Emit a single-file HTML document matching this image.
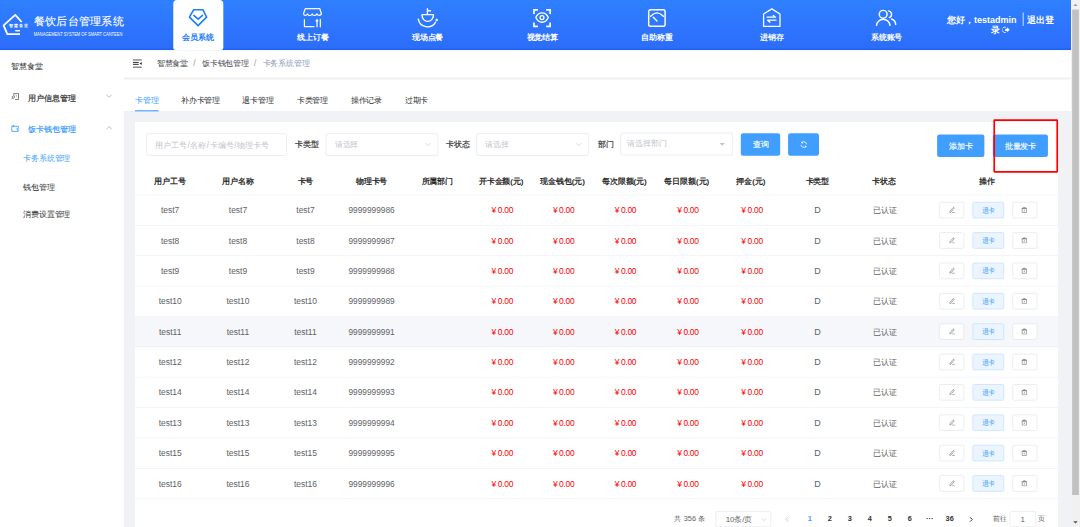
<!DOCTYPE html>
<html><head><meta charset="utf-8">
<style>
*{box-sizing:border-box;margin:0;padding:0}
html,body{width:1080px;height:527px;overflow:hidden;background:#fff}
body{font-family:"Liberation Sans",sans-serif;}
#app{position:absolute;left:0;top:0;width:1920px;height:937px;transform:scale(0.5625);transform-origin:0 0;background:#fff;overflow:hidden}
.abs{position:absolute}
#hdr{left:0;top:0;width:1904px;height:88.5px;z-index:5;background:linear-gradient(180deg,#2f80ff 0%,#2d74fd 60%,#2c6dfa 95%,#1a5ff5 100%)}
.navtxt{position:absolute;top:57px;font-size:14px;font-weight:bold;color:#fff;white-space:nowrap;line-height:18px;transform:translateX(-50%)}
#side{left:0;top:87px;width:220px;height:850px;background:#fff}
.mi{position:absolute;font-size:14px;color:#303133;line-height:20px;white-space:nowrap}
#main{left:220px;top:87px;width:1684px;height:850px;background:#fff}
#bc{left:0;top:0;width:1684px;height:50px;background:#fff}
#tabs{left:0;top:55px;width:1684px;height:55px;background:#fff}
#bcsh{left:0;top:49px;width:1684px;height:8px;background:linear-gradient(180deg,rgba(0,0,0,0) 0%,rgba(0,0,0,.065) 40%,rgba(0,0,0,.03) 70%,rgba(0,0,0,0) 100%)}
.tab{top:26.3px;font-size:14px;line-height:20px;color:#303133;white-space:nowrap}
.inp{height:40px;border:1px solid #dcdfe6;border-radius:4px;background:#fff}
.ph{position:absolute;left:15px;top:9px;font-size:14px;line-height:20px;color:#c0c4cc;white-space:nowrap}
.lbl{top:29.5px;font-size:14px;line-height:20px;color:#3a3a3a;-webkit-text-stroke:0.35px #3a3a3a;white-space:nowrap}
.btn{top:21px;-webkit-text-stroke:0.25px #fff;height:40px;background:#409eff;border-radius:4px;color:#fff;font-size:14px;line-height:40px;text-align:center;white-space:nowrap}
.btn svg{vertical-align:-2px}
.tr{display:flex;height:54.06px;border-bottom:1px solid #ebeef5;align-items:center}
.tr.th{height:47.5px;color:#303133}
.tr.hv{background:#f5f7fa}
.td{text-align:center;font-size:14px;color:#606266;white-space:nowrap;line-height:20px}
.th .td{color:#111;font-weight:normal;-webkit-text-stroke:0.4px #111}
.lt{font-size:15px;position:relative;top:1px}
.ln{font-size:14.8px;position:relative;top:1px}
.m{color:#f00;font-size:15px;letter-spacing:-0.5px;position:relative;left:2px;top:1px}
.y{display:inline-block;width:11px;text-align:left;font-size:15px;letter-spacing:0}
.ob{display:inline-block;vertical-align:middle;height:29px;border:1px solid #dcdfe6;border-radius:3px;background:#fff;width:44px;line-height:29px;font-size:12px;margin:0 7.5px;position:relative;left:2px}
.ob svg{vertical-align:-1px}
.ob.tk{width:56px;background:#ecf5ff;border-color:#b3d8ff;color:#409eff}
.pg{font-size:13px;color:#606266;line-height:18px}
.sel{height:28px;border:1px solid #dcdfe6;border-radius:3px;background:#fff;font-size:13px;color:#606266;line-height:18px}
.pn{top:0;width:35.5px;text-align:center;color:#303133;font-weight:bold}
#card{left:20px;top:130px;width:1641px;height:740px;background:#fff}
</style></head><body>
<div id="app">
  <div id="hdr" class="abs">
    <div class="abs" style="left:307.5px;top:0;width:89px;height:88.5px;background:#fff;border-radius:7px 7px 4px 4px"></div>
    <div class="abs" style="left:60px;top:24.5px;font-size:20.3px;color:#fff;line-height:26px;white-space:nowrap;-webkit-text-stroke:0.2px #fff">餐饮后台管理系统</div>
    <div class="abs" style="left:60px;top:55px;font-size:8.6px;color:#fff;line-height:12px;white-space:nowrap;transform:scaleX(0.833);transform-origin:0 0">MANAGEMENT SYSTEM OF SMART CANTEEN</div>
    <div class="abs" style="left:16px;top:41px;width:36px;height:10px;font-size:7.6px;color:#fff;line-height:10px;white-space:nowrap;font-weight:bold"><span class="abs" style="left:0">智</span><span class="abs" style="left:9px">慧</span><span class="abs" style="left:18px">食</span><span class="abs" style="left:27px">堂</span></div>
    <svg class="abs" style="left:0;top:0" width="1904" height="87" viewBox="0 0 1071 48.94" fill="none" stroke="#fff" stroke-linecap="round" stroke-linejoin="round">
      <!-- logo -->
      <path d="M21.6 22 L15.2 14.9 L3.6 25.4 L7.3 34.2 L20 34.2" stroke-width="1.8" stroke-linecap="butt"/>
      <path d="M15.2 30.7 H20" stroke-width="1.5" stroke-linecap="butt"/>
      <!-- diamond -->
      <g stroke="#1a7ef9" stroke-width="1.6">
        <path d="M193.7 9.7 H202.8 L206.6 17.1 L198.1 25.6 L189.4 17.1 Z"/>
        <path d="M193.8 15.4 L198.1 19.1 L202.5 15.4"/>
      </g>
      <!-- shop -->
      <g stroke-width="1.2">
        <path d="M305.2 8.7 H319.8 L321.3 13.3 Q321.3 15.3 319.2 15.3 Q317.6 15.3 317 13.9 Q316 15.5 314.3 15.5 Q312.6 15.5 312.2 13.9 Q311.6 15.5 309.9 15.5 Q308.2 15.5 307.5 13.9 Q307 15.3 305.5 15.3 Q303.5 15.3 303.6 13.3 Z"/>
        <path d="M304.4 19.6 V26.6 H314"/>
        <path d="M317 19.3 V26.8 M320.3 19.3 V26.8 M316.1 20.9 H317.9"/>
      </g>
      <!-- bowl -->
      <g stroke-width="1.4">
        <path d="M427.4 8.6 V14.3 M427.4 10.8 H430.5"/>
        <path d="M422 14.6 H433.4 V15.3 A5.7 6.1 0 0 1 422 15.3 Z"/>
        <path d="M418.3 19.2 A9.3 9 0 0 0 435.6 22.2"/>
        <circle cx="436.7" cy="20" r="0.5" fill="#fff"/>
      </g>
      <!-- eye -->
      <g stroke-width="1.7" stroke-linecap="butt" stroke-linejoin="miter">
        <path d="M533.95 13.9 V9.95 H537.9 M546.2 9.95 H550.15 V13.9 M550.15 22.4 V26.4 H546.2 M537.9 26.4 H533.95 V22.4"/>
        <path d="M535.8 17.6 C538.5 11.4 545.6 11.4 548.3 17.6 C545.6 23.8 538.5 23.8 535.8 17.6 Z" stroke-linejoin="round" stroke-width="1.3"/>
        <circle cx="542" cy="17.6" r="1.95" stroke-width="1.3"/>
      </g>
      <!-- scale -->
      <g stroke-width="1.45">
        <rect x="648.7" y="9.7" width="16.4" height="16.6" rx="1.8"/>
        <path d="M650.6 16.3 Q657 9.5 663.4 16.3"/>
        <path d="M653.3 17.2 L657 21"/>
      </g>
      <!-- house arrows -->
      <g stroke-width="1.3">
        <path d="M763.6 14 L771.8 8.9 L780 14 V26.3 H763.6 Z"/>
        <path d="M767.2 17.2 H775.6 L773.3 15.4 M776 20.2 H767.6 L769.9 22.2"/>
      </g>
      <!-- users -->
      <g stroke-width="1.45">
        <circle cx="883.2" cy="14.3" r="3.9"/>
        <path d="M876.5 25.3 A6.8 6.8 0 0 1 890 25.3"/>
        <path d="M888.6 10.9 A3.5 3.5 0 0 1 889.4 17.6"/>
        <path d="M891.5 19 A6 6 0 0 1 895.7 24.5"/>
      </g>
    </svg>
    <div class="navtxt" style="left:352px;color:#1c7cf9">会员系统</div>
    <div class="navtxt" style="left:556px">线上订餐</div>
    <div class="navtxt" style="left:760px">现场点餐</div>
    <div class="navtxt" style="left:964px">视觉结算</div>
    <div class="navtxt" style="left:1168px">自助称重</div>
    <div class="navtxt" style="left:1372px">进销存</div>
    <div class="navtxt" style="left:1576px">系统账号</div>
    <div class="abs" style="left:1683px;top:26px;width:192px;font-size:16px;font-weight:bold;color:#fff;line-height:18.6px;text-align:center">您好，testadmin<span style="border-left:2px solid rgba(255,255,255,.7);padding:4px 0 3px 0;margin:0 6px 0 11px"></span>退出登录 <svg width="14" height="14" viewBox="0 0 14 14" style="vertical-align:-1px"><path d="M6 2.5 A4.8 4.8 0 1 0 6 11.5" fill="none" stroke="#fff" stroke-width="1.6"/><path d="M5 5 H8.5 V2.5 L13 7 L8.5 11.5 V9 H5 Z" fill="#fff"/></svg></div>
  </div>
  <div id="side" class="abs">
    <div class="mi" style="left:20px;top:20px;color:#303133">智慧食堂</div>
    <svg class="abs" style="left:19px;top:78px" width="16" height="16" viewBox="0 0 16 16" fill="none" stroke="#606266" stroke-width="1.3"><path d="M5.6 4.8 V1 H13.9 V11.8 H7.8" stroke-width="1.5"/><path d="M8.4 4.3 H11 M10.8 4.3 V8" stroke="#aaa" stroke-width="1.3"/><circle cx="4.8" cy="7.6" r="2.1" stroke-width="1.4"/><path d="M3.3 9.3 L1.6 11.6" stroke-width="1.3"/></svg>
    <div class="mi" style="left:50px;top:76.5px;color:#303133;-webkit-text-stroke:0.35px #303133">用户信息管理</div>
    <svg class="abs" style="left:188px;top:80px" width="12" height="8" viewBox="0 0 12 8" fill="none" stroke="#909399" stroke-width="1.1"><path d="M1.5 1.5 L6 6 L10.5 1.5"/></svg>
    <svg class="abs" style="left:19px;top:133px" width="16" height="16" viewBox="0 0 16 16" fill="none" stroke="#409eff" stroke-width="1.4"><path d="M2 5 L5.5 2.7 V5 M2 4.6 H13.6 V8.3 H11.2 V10.8 H13.6 V13.6 H2 Z" stroke-width="1.5"/></svg>
    <div class="mi" style="left:50px;top:132.5px;color:#409eff;-webkit-text-stroke:0.35px #409eff">饭卡钱包管理</div>
    <svg class="abs" style="left:188px;top:136px" width="12" height="8" viewBox="0 0 12 8" fill="none" stroke="#909399" stroke-width="1.1"><path d="M1.5 6.5 L6 2 L10.5 6.5"/></svg>
    <div class="mi" style="left:41px;top:185px;color:#409eff">卡务系统管理</div>
    <div class="mi" style="left:41px;top:234.5px">钱包管理</div>
    <div class="mi" style="left:41px;top:284px">消费设置管理</div>
  </div>
  <div id="main" class="abs">
    <div id="bc" class="abs">
      <svg class="abs" style="left:16px;top:18px" width="17" height="16" viewBox="0 0 17 16" fill="#303133"><rect x="0" y="0.7" width="16" height="1.8" fill="#555"/><rect x="0" y="5.1" width="10.5" height="1.8"/><rect x="0" y="8.5" width="10.5" height="1.8"/><rect x="0" y="13.5" width="16" height="1.8" fill="#555"/><path d="M16 5 L12 7.8 L16 10.6 Z"/></svg>
      <div class="abs" style="left:58.5px;top:16px;font-size:14px;line-height:20px;white-space:nowrap;color:#606266"><span style="color:#4a4c50">智慧食堂</span><span style="margin:0 11px 0 9px;color:#9a9ea6;font-size:15px">/</span><span style="color:#4a4c50">饭卡钱包管理</span><span style="margin:0 11px 0 9px;color:#9a9ea6;font-size:15px">/</span><span style="color:#8a9cbc">卡务系统管理</span></div>
    </div>
    <div class="abs" style="left:0;top:110px;width:1684px;height:740px;background:#f0f2f5"></div>
    <div id="bcsh" class="abs"></div>
    <div id="tabs" class="abs">
      <div class="abs tab" style="left:20px;color:#409eff">卡管理</div>
      <div class="abs" style="left:20px;top:54px;width:42px;height:2px;background:#409eff"></div>
      <div class="abs tab" style="left:101.5px">补办卡管理</div>
      <div class="abs tab" style="left:211px">退卡管理</div>
      <div class="abs tab" style="left:307.5px">卡类管理</div>
      <div class="abs tab" style="left:403.5px">操作记录</div>
      <div class="abs tab" style="left:499.5px">过期卡</div>
    </div>
    <div id="card" class="abs">
      <div class="inp abs" style="left:20px;top:20px;width:250px"><span class="ph" style="top:9.5px">用户工号<span style="margin:0 1.2px;font-size:15px">/</span>名称<span style="margin:0 1.2px;font-size:15px">/</span>卡编号<span style="margin:0 1.2px;font-size:15px">/</span>物理卡号</span></div>
      <div class="lbl abs" style="left:285px">卡类型</div>
      <div class="inp abs" style="left:339px;top:20px;width:200px"><span class="ph">请选择</span><svg class="abs" style="right:11px;top:15px" width="12" height="8" viewBox="0 0 12 8" fill="none" stroke="#c0c4cc" stroke-width="1.1"><path d="M1.5 1.5 L6 6 L10.5 1.5"/></svg></div>
      <div class="lbl abs" style="left:553px">卡状态</div>
      <div class="inp abs" style="left:607px;top:20px;width:200px"><span class="ph">请选择</span><svg class="abs" style="right:11px;top:15px" width="12" height="8" viewBox="0 0 12 8" fill="none" stroke="#c0c4cc" stroke-width="1.1"><path d="M1.5 1.5 L6 6 L10.5 1.5"/></svg></div>
      <div class="lbl abs" style="left:823px">部门</div>
      <div class="inp abs" style="left:863px;top:19px;width:200px"><span class="ph" style="left:11px;top:8px">请选择部门</span><svg class="abs" style="right:12px;top:17px" width="12" height="6" viewBox="0 0 12 6" fill="#c0c4cc"><path d="M1 0 H11 L6 5 Z"/></svg></div>
      <div class="btn abs" style="left:1077px;width:70px;top:20px">查询</div>
      <div class="btn abs" style="left:1161px;width:55px;top:20px"><svg width="14" height="14" viewBox="0 0 14 14" fill="none" stroke="#fff" stroke-width="1.5"><path d="M3.6 3.4 A4.9 4.9 0 0 1 11.9 6.5 M10.4 10.6 A4.9 4.9 0 0 1 2.1 7.5"/><path d="M1.8 3.2 L4.8 1.9 L4.6 5.1 Z M12.2 10.8 L9.2 12.1 L9.4 8.9 Z" fill="#fff" stroke-width="0.6"/></svg></div>
      <div class="btn abs" style="left:1426px;width:84px;top:21.5px">添加卡</div>
      <div class="btn abs" style="left:1525px;width:98px;top:21.5px">批量发卡</div>
      <div class="abs" style="left:1526px;top:-5px;width:114.5px;height:95px;border:3.4px solid #f00;border-radius:2px"></div>
      <div class="abs" style="left:0;top:82px;width:1641px"><div class="tr th"><div class="td" style="width:125px">用户工号</div><div class="td" style="width:116px">用户名称</div><div class="td" style="width:124px">卡号</div><div class="td" style="width:111px">物理卡号</div><div class="td" style="width:123px">所属部门</div><div class="td" style="width:104px">开卡金额(元)</div><div class="td" style="width:114px">现金钱包(元)</div><div class="td" style="width:106px">每次限额(元)</div><div class="td" style="width:116px">每日限额(元)</div><div class="td" style="width:112px">押金(元)</div><div class="td" style="width:124px">卡类型</div><div class="td" style="width:114px">卡状态</div><div class="td" style="width:252px">操作</div></div><div class="tr "><div class="td" style="width:125px"><span class="lt">test7</span></div><div class="td" style="width:116px"><span class="lt">test7</span></div><div class="td" style="width:124px"><span class="lt">test7</span></div><div class="td" style="width:111px"><span class="ln">9999999986</span></div><div class="td" style="width:123px"></div><div class="td" style="width:104px"><span class="m"><span class="y">¥</span>0.00</span></div><div class="td" style="width:114px"><span class="m"><span class="y">¥</span>0.00</span></div><div class="td" style="width:106px"><span class="m"><span class="y">¥</span>0.00</span></div><div class="td" style="width:116px"><span class="m"><span class="y">¥</span>0.00</span></div><div class="td" style="width:112px"><span class="m"><span class="y">¥</span>0.00</span></div><div class="td" style="width:124px"><span style="font-size:16px;position:relative;left:0.5px;top:1px">D</span></div><div class="td" style="width:114px"><span style="position:relative;left:1px;top:1px">已认证</span></div><div class="td" style="width:252px"><span class="ob"><svg width="12" height="12" viewBox="0 0 12 12" fill="none" stroke="#6b6e74" stroke-width="1.05"><path d="M2.6 10.6 L2.9 8.6 L8.3 2.2 Q9.2 1.3 10 2.1 Q10.7 2.9 9.9 3.8 L4.6 10.2 Z M6.8 10.8 H11.4"/></svg></span><span class="ob tk">退卡</span><span class="ob"><svg width="12" height="12" viewBox="0 0 12 12" fill="none" stroke="#6b6e74" stroke-width="1.05" style="position:relative;left:-1.5px"><path d="M2.3 3.4 H9.7 V10.9 H2.3 Z M1.3 3.4 H10.7 M4.6 3.4 V1.6 H7.4 V3.4 M6 5.6 V8.8"/></svg></span></div></div><div class="tr "><div class="td" style="width:125px"><span class="lt">test8</span></div><div class="td" style="width:116px"><span class="lt">test8</span></div><div class="td" style="width:124px"><span class="lt">test8</span></div><div class="td" style="width:111px"><span class="ln">9999999987</span></div><div class="td" style="width:123px"></div><div class="td" style="width:104px"><span class="m"><span class="y">¥</span>0.00</span></div><div class="td" style="width:114px"><span class="m"><span class="y">¥</span>0.00</span></div><div class="td" style="width:106px"><span class="m"><span class="y">¥</span>0.00</span></div><div class="td" style="width:116px"><span class="m"><span class="y">¥</span>0.00</span></div><div class="td" style="width:112px"><span class="m"><span class="y">¥</span>0.00</span></div><div class="td" style="width:124px"><span style="font-size:16px;position:relative;left:0.5px;top:1px">D</span></div><div class="td" style="width:114px"><span style="position:relative;left:1px;top:1px">已认证</span></div><div class="td" style="width:252px"><span class="ob"><svg width="12" height="12" viewBox="0 0 12 12" fill="none" stroke="#6b6e74" stroke-width="1.05"><path d="M2.6 10.6 L2.9 8.6 L8.3 2.2 Q9.2 1.3 10 2.1 Q10.7 2.9 9.9 3.8 L4.6 10.2 Z M6.8 10.8 H11.4"/></svg></span><span class="ob tk">退卡</span><span class="ob"><svg width="12" height="12" viewBox="0 0 12 12" fill="none" stroke="#6b6e74" stroke-width="1.05" style="position:relative;left:-1.5px"><path d="M2.3 3.4 H9.7 V10.9 H2.3 Z M1.3 3.4 H10.7 M4.6 3.4 V1.6 H7.4 V3.4 M6 5.6 V8.8"/></svg></span></div></div><div class="tr "><div class="td" style="width:125px"><span class="lt">test9</span></div><div class="td" style="width:116px"><span class="lt">test9</span></div><div class="td" style="width:124px"><span class="lt">test9</span></div><div class="td" style="width:111px"><span class="ln">9999999988</span></div><div class="td" style="width:123px"></div><div class="td" style="width:104px"><span class="m"><span class="y">¥</span>0.00</span></div><div class="td" style="width:114px"><span class="m"><span class="y">¥</span>0.00</span></div><div class="td" style="width:106px"><span class="m"><span class="y">¥</span>0.00</span></div><div class="td" style="width:116px"><span class="m"><span class="y">¥</span>0.00</span></div><div class="td" style="width:112px"><span class="m"><span class="y">¥</span>0.00</span></div><div class="td" style="width:124px"><span style="font-size:16px;position:relative;left:0.5px;top:1px">D</span></div><div class="td" style="width:114px"><span style="position:relative;left:1px;top:1px">已认证</span></div><div class="td" style="width:252px"><span class="ob"><svg width="12" height="12" viewBox="0 0 12 12" fill="none" stroke="#6b6e74" stroke-width="1.05"><path d="M2.6 10.6 L2.9 8.6 L8.3 2.2 Q9.2 1.3 10 2.1 Q10.7 2.9 9.9 3.8 L4.6 10.2 Z M6.8 10.8 H11.4"/></svg></span><span class="ob tk">退卡</span><span class="ob"><svg width="12" height="12" viewBox="0 0 12 12" fill="none" stroke="#6b6e74" stroke-width="1.05" style="position:relative;left:-1.5px"><path d="M2.3 3.4 H9.7 V10.9 H2.3 Z M1.3 3.4 H10.7 M4.6 3.4 V1.6 H7.4 V3.4 M6 5.6 V8.8"/></svg></span></div></div><div class="tr "><div class="td" style="width:125px"><span class="lt">test10</span></div><div class="td" style="width:116px"><span class="lt">test10</span></div><div class="td" style="width:124px"><span class="lt">test10</span></div><div class="td" style="width:111px"><span class="ln">9999999989</span></div><div class="td" style="width:123px"></div><div class="td" style="width:104px"><span class="m"><span class="y">¥</span>0.00</span></div><div class="td" style="width:114px"><span class="m"><span class="y">¥</span>0.00</span></div><div class="td" style="width:106px"><span class="m"><span class="y">¥</span>0.00</span></div><div class="td" style="width:116px"><span class="m"><span class="y">¥</span>0.00</span></div><div class="td" style="width:112px"><span class="m"><span class="y">¥</span>0.00</span></div><div class="td" style="width:124px"><span style="font-size:16px;position:relative;left:0.5px;top:1px">D</span></div><div class="td" style="width:114px"><span style="position:relative;left:1px;top:1px">已认证</span></div><div class="td" style="width:252px"><span class="ob"><svg width="12" height="12" viewBox="0 0 12 12" fill="none" stroke="#6b6e74" stroke-width="1.05"><path d="M2.6 10.6 L2.9 8.6 L8.3 2.2 Q9.2 1.3 10 2.1 Q10.7 2.9 9.9 3.8 L4.6 10.2 Z M6.8 10.8 H11.4"/></svg></span><span class="ob tk">退卡</span><span class="ob"><svg width="12" height="12" viewBox="0 0 12 12" fill="none" stroke="#6b6e74" stroke-width="1.05" style="position:relative;left:-1.5px"><path d="M2.3 3.4 H9.7 V10.9 H2.3 Z M1.3 3.4 H10.7 M4.6 3.4 V1.6 H7.4 V3.4 M6 5.6 V8.8"/></svg></span></div></div><div class="tr hv"><div class="td" style="width:125px"><span class="lt">test11</span></div><div class="td" style="width:116px"><span class="lt">test11</span></div><div class="td" style="width:124px"><span class="lt">test11</span></div><div class="td" style="width:111px"><span class="ln">9999999991</span></div><div class="td" style="width:123px"></div><div class="td" style="width:104px"><span class="m"><span class="y">¥</span>0.00</span></div><div class="td" style="width:114px"><span class="m"><span class="y">¥</span>0.00</span></div><div class="td" style="width:106px"><span class="m"><span class="y">¥</span>0.00</span></div><div class="td" style="width:116px"><span class="m"><span class="y">¥</span>0.00</span></div><div class="td" style="width:112px"><span class="m"><span class="y">¥</span>0.00</span></div><div class="td" style="width:124px"><span style="font-size:16px;position:relative;left:0.5px;top:1px">D</span></div><div class="td" style="width:114px"><span style="position:relative;left:1px;top:1px">已认证</span></div><div class="td" style="width:252px"><span class="ob"><svg width="12" height="12" viewBox="0 0 12 12" fill="none" stroke="#6b6e74" stroke-width="1.05"><path d="M2.6 10.6 L2.9 8.6 L8.3 2.2 Q9.2 1.3 10 2.1 Q10.7 2.9 9.9 3.8 L4.6 10.2 Z M6.8 10.8 H11.4"/></svg></span><span class="ob tk">退卡</span><span class="ob"><svg width="12" height="12" viewBox="0 0 12 12" fill="none" stroke="#6b6e74" stroke-width="1.05" style="position:relative;left:-1.5px"><path d="M2.3 3.4 H9.7 V10.9 H2.3 Z M1.3 3.4 H10.7 M4.6 3.4 V1.6 H7.4 V3.4 M6 5.6 V8.8"/></svg></span></div></div><div class="tr "><div class="td" style="width:125px"><span class="lt">test12</span></div><div class="td" style="width:116px"><span class="lt">test12</span></div><div class="td" style="width:124px"><span class="lt">test12</span></div><div class="td" style="width:111px"><span class="ln">9999999992</span></div><div class="td" style="width:123px"></div><div class="td" style="width:104px"><span class="m"><span class="y">¥</span>0.00</span></div><div class="td" style="width:114px"><span class="m"><span class="y">¥</span>0.00</span></div><div class="td" style="width:106px"><span class="m"><span class="y">¥</span>0.00</span></div><div class="td" style="width:116px"><span class="m"><span class="y">¥</span>0.00</span></div><div class="td" style="width:112px"><span class="m"><span class="y">¥</span>0.00</span></div><div class="td" style="width:124px"><span style="font-size:16px;position:relative;left:0.5px;top:1px">D</span></div><div class="td" style="width:114px"><span style="position:relative;left:1px;top:1px">已认证</span></div><div class="td" style="width:252px"><span class="ob"><svg width="12" height="12" viewBox="0 0 12 12" fill="none" stroke="#6b6e74" stroke-width="1.05"><path d="M2.6 10.6 L2.9 8.6 L8.3 2.2 Q9.2 1.3 10 2.1 Q10.7 2.9 9.9 3.8 L4.6 10.2 Z M6.8 10.8 H11.4"/></svg></span><span class="ob tk">退卡</span><span class="ob"><svg width="12" height="12" viewBox="0 0 12 12" fill="none" stroke="#6b6e74" stroke-width="1.05" style="position:relative;left:-1.5px"><path d="M2.3 3.4 H9.7 V10.9 H2.3 Z M1.3 3.4 H10.7 M4.6 3.4 V1.6 H7.4 V3.4 M6 5.6 V8.8"/></svg></span></div></div><div class="tr "><div class="td" style="width:125px"><span class="lt">test14</span></div><div class="td" style="width:116px"><span class="lt">test14</span></div><div class="td" style="width:124px"><span class="lt">test14</span></div><div class="td" style="width:111px"><span class="ln">9999999993</span></div><div class="td" style="width:123px"></div><div class="td" style="width:104px"><span class="m"><span class="y">¥</span>0.00</span></div><div class="td" style="width:114px"><span class="m"><span class="y">¥</span>0.00</span></div><div class="td" style="width:106px"><span class="m"><span class="y">¥</span>0.00</span></div><div class="td" style="width:116px"><span class="m"><span class="y">¥</span>0.00</span></div><div class="td" style="width:112px"><span class="m"><span class="y">¥</span>0.00</span></div><div class="td" style="width:124px"><span style="font-size:16px;position:relative;left:0.5px;top:1px">D</span></div><div class="td" style="width:114px"><span style="position:relative;left:1px;top:1px">已认证</span></div><div class="td" style="width:252px"><span class="ob"><svg width="12" height="12" viewBox="0 0 12 12" fill="none" stroke="#6b6e74" stroke-width="1.05"><path d="M2.6 10.6 L2.9 8.6 L8.3 2.2 Q9.2 1.3 10 2.1 Q10.7 2.9 9.9 3.8 L4.6 10.2 Z M6.8 10.8 H11.4"/></svg></span><span class="ob tk">退卡</span><span class="ob"><svg width="12" height="12" viewBox="0 0 12 12" fill="none" stroke="#6b6e74" stroke-width="1.05" style="position:relative;left:-1.5px"><path d="M2.3 3.4 H9.7 V10.9 H2.3 Z M1.3 3.4 H10.7 M4.6 3.4 V1.6 H7.4 V3.4 M6 5.6 V8.8"/></svg></span></div></div><div class="tr "><div class="td" style="width:125px"><span class="lt">test13</span></div><div class="td" style="width:116px"><span class="lt">test13</span></div><div class="td" style="width:124px"><span class="lt">test13</span></div><div class="td" style="width:111px"><span class="ln">9999999994</span></div><div class="td" style="width:123px"></div><div class="td" style="width:104px"><span class="m"><span class="y">¥</span>0.00</span></div><div class="td" style="width:114px"><span class="m"><span class="y">¥</span>0.00</span></div><div class="td" style="width:106px"><span class="m"><span class="y">¥</span>0.00</span></div><div class="td" style="width:116px"><span class="m"><span class="y">¥</span>0.00</span></div><div class="td" style="width:112px"><span class="m"><span class="y">¥</span>0.00</span></div><div class="td" style="width:124px"><span style="font-size:16px;position:relative;left:0.5px;top:1px">D</span></div><div class="td" style="width:114px"><span style="position:relative;left:1px;top:1px">已认证</span></div><div class="td" style="width:252px"><span class="ob"><svg width="12" height="12" viewBox="0 0 12 12" fill="none" stroke="#6b6e74" stroke-width="1.05"><path d="M2.6 10.6 L2.9 8.6 L8.3 2.2 Q9.2 1.3 10 2.1 Q10.7 2.9 9.9 3.8 L4.6 10.2 Z M6.8 10.8 H11.4"/></svg></span><span class="ob tk">退卡</span><span class="ob"><svg width="12" height="12" viewBox="0 0 12 12" fill="none" stroke="#6b6e74" stroke-width="1.05" style="position:relative;left:-1.5px"><path d="M2.3 3.4 H9.7 V10.9 H2.3 Z M1.3 3.4 H10.7 M4.6 3.4 V1.6 H7.4 V3.4 M6 5.6 V8.8"/></svg></span></div></div><div class="tr "><div class="td" style="width:125px"><span class="lt">test15</span></div><div class="td" style="width:116px"><span class="lt">test15</span></div><div class="td" style="width:124px"><span class="lt">test15</span></div><div class="td" style="width:111px"><span class="ln">9999999995</span></div><div class="td" style="width:123px"></div><div class="td" style="width:104px"><span class="m"><span class="y">¥</span>0.00</span></div><div class="td" style="width:114px"><span class="m"><span class="y">¥</span>0.00</span></div><div class="td" style="width:106px"><span class="m"><span class="y">¥</span>0.00</span></div><div class="td" style="width:116px"><span class="m"><span class="y">¥</span>0.00</span></div><div class="td" style="width:112px"><span class="m"><span class="y">¥</span>0.00</span></div><div class="td" style="width:124px"><span style="font-size:16px;position:relative;left:0.5px;top:1px">D</span></div><div class="td" style="width:114px"><span style="position:relative;left:1px;top:1px">已认证</span></div><div class="td" style="width:252px"><span class="ob"><svg width="12" height="12" viewBox="0 0 12 12" fill="none" stroke="#6b6e74" stroke-width="1.05"><path d="M2.6 10.6 L2.9 8.6 L8.3 2.2 Q9.2 1.3 10 2.1 Q10.7 2.9 9.9 3.8 L4.6 10.2 Z M6.8 10.8 H11.4"/></svg></span><span class="ob tk">退卡</span><span class="ob"><svg width="12" height="12" viewBox="0 0 12 12" fill="none" stroke="#6b6e74" stroke-width="1.05" style="position:relative;left:-1.5px"><path d="M2.3 3.4 H9.7 V10.9 H2.3 Z M1.3 3.4 H10.7 M4.6 3.4 V1.6 H7.4 V3.4 M6 5.6 V8.8"/></svg></span></div></div><div class="tr "><div class="td" style="width:125px"><span class="lt">test16</span></div><div class="td" style="width:116px"><span class="lt">test16</span></div><div class="td" style="width:124px"><span class="lt">test16</span></div><div class="td" style="width:111px"><span class="ln">9999999996</span></div><div class="td" style="width:123px"></div><div class="td" style="width:104px"><span class="m"><span class="y">¥</span>0.00</span></div><div class="td" style="width:114px"><span class="m"><span class="y">¥</span>0.00</span></div><div class="td" style="width:106px"><span class="m"><span class="y">¥</span>0.00</span></div><div class="td" style="width:116px"><span class="m"><span class="y">¥</span>0.00</span></div><div class="td" style="width:112px"><span class="m"><span class="y">¥</span>0.00</span></div><div class="td" style="width:124px"><span style="font-size:16px;position:relative;left:0.5px;top:1px">D</span></div><div class="td" style="width:114px"><span style="position:relative;left:1px;top:1px">已认证</span></div><div class="td" style="width:252px"><span class="ob"><svg width="12" height="12" viewBox="0 0 12 12" fill="none" stroke="#6b6e74" stroke-width="1.05"><path d="M2.6 10.6 L2.9 8.6 L8.3 2.2 Q9.2 1.3 10 2.1 Q10.7 2.9 9.9 3.8 L4.6 10.2 Z M6.8 10.8 H11.4"/></svg></span><span class="ob tk">退卡</span><span class="ob"><svg width="12" height="12" viewBox="0 0 12 12" fill="none" stroke="#6b6e74" stroke-width="1.05" style="position:relative;left:-1.5px"><path d="M2.3 3.4 H9.7 V10.9 H2.3 Z M1.3 3.4 H10.7 M4.6 3.4 V1.6 H7.4 V3.4 M6 5.6 V8.8"/></svg></span></div></div></div>
      <div class="abs pg" style="left:959px;top:697px">
        <span class="abs" style="left:0;top:0;white-space:nowrap">共 356 条</span>
        <span class="abs sel" style="left:73px;top:-5px;width:98.5px"><span style="position:absolute;left:17px;top:4px;font-size:14px">10条/页</span><svg class="abs" style="right:7px;top:9.5px" width="10" height="7" viewBox="0 0 10 7" fill="none" stroke="#c0c4cc" stroke-width="1"><path d="M1 1.5 L5 5.5 L9 1.5"/></svg></span>
        <svg class="abs" style="left:196px;top:3px" width="9" height="12" viewBox="0 0 9 12" fill="none" stroke="#c0c4cc" stroke-width="1.3"><path d="M7 1 L2 6 L7 11"/></svg>
        <span class="abs pn" style="left:223.0px;color:#409eff">1</span>
        <span class="abs pn" style="left:258.5px">2</span>
        <span class="abs pn" style="left:294.0px">3</span>
        <span class="abs pn" style="left:329.5px">4</span>
        <span class="abs pn" style="left:365.0px">5</span>
        <span class="abs pn" style="left:400.5px">6</span>
        <span class="abs pn" style="left:436.0px">···</span>
        <span class="abs pn" style="left:471.5px">36</span>
        <svg class="abs" style="left:523px;top:4px" width="9" height="11" viewBox="0 0 9 11" fill="none" stroke="#303133" stroke-width="1.7"><path d="M2.5 1.5 L6.5 5.5 L2.5 9.5"/></svg>
        <span class="abs" style="left:566px;top:0;white-space:nowrap">前往</span>
        <span class="abs sel" style="left:596px;top:-5px;width:46.5px;text-align:center"><span style="position:relative;top:4px;font-size:14px">1</span></span>
        <span class="abs" style="left:647px;top:0;white-space:nowrap">页</span>
      </div>
    </div>
  </div>
<div class="abs" style="left:1904px;top:0;width:16px;height:937px;background:#f1f1f1">
    <svg class="abs" style="left:0;top:0" width="16" height="17" viewBox="0 0 16 17"><path d="M4 10.5 L8 6.5 L12 10.5 Z" fill="#a3a3a3"/></svg>
    <div class="abs" style="left:2px;top:17px;width:12px;height:863px;background:#c1c1c1"></div>
    <svg class="abs" style="left:0;top:920px" width="16" height="17" viewBox="0 0 16 17"><path d="M4 6.5 L8 10.5 L12 6.5 Z" fill="#505050"/></svg>
  </div>
</div>
</body></html>
